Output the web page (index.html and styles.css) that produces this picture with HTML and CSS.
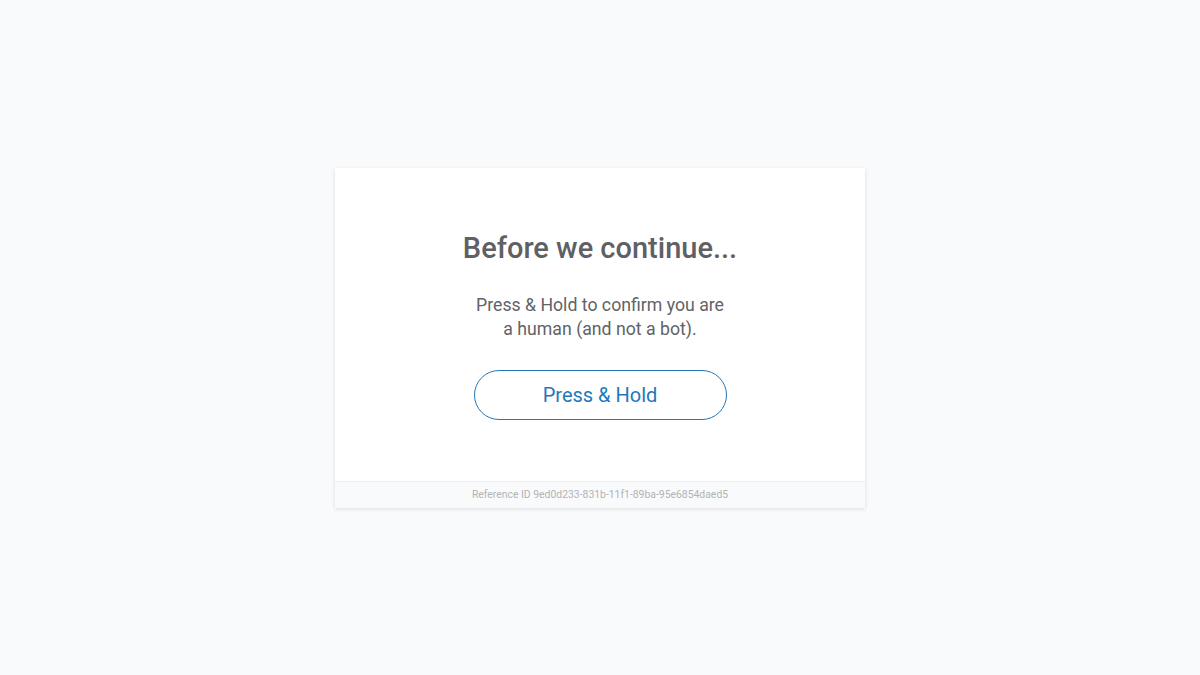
FILE: index.html
```html
<!DOCTYPE html>
<html>
  <head>
    <meta charset="utf-8" />
    <link rel="stylesheet" href="styles.css">
  </head>

  <body>
    <div class="page">
      <div class="card">
        <div class="card-body">
          <h1 class="title">Before we continue...</h1>
          <p class="text">Press &amp; Hold to confirm you are<br>a human (and not a bot).</p>
          <button class="hold">Press &amp; Hold</button>
        </div>
        <div class="card-footer">Reference ID 9ed0d233-831b-11f1-89ba-95e6854daed5</div>
      </div>
    </div>
  </body>
</html>
```

FILE: styles.css
```css
html,
body {
  margin: 0;
  padding: 0;
  height: 100%;
  background: #f9fafc;
  font-family: Roboto, "Liberation Sans", sans-serif;
}

.page {
  height: 100%;
  display: flex;
  align-items: center;
  justify-content: center;
}
.card {
  width: 530px;
  background: #fff;
  box-shadow: 0 1px 4px rgba(0, 0, 0, 0.12);
}
.card-body {
  padding: 63px 20px 61px;
  display: flex;
  flex-direction: column;
  align-items: center;
  text-align: center;
}
.title {
  margin: 0;
  font-size: 29px;
  line-height: 34px;
  font-weight: 500;
  color: #5f6064;
}
.text {
  margin: 28px 0 0;
  font-size: 17.7px;
  line-height: 24px;
  color: #626366;
}
.hold {
  margin-top: 29px;
  width: 253px;
  height: 50px;
  border: 1px solid #2376b7;
  border-radius: 25px;
  background: #fff;
  color: #1f78bd;
  font-family: inherit;
  font-size: 20px;
  cursor: pointer;
  outline: none;
}
.card-footer {
  height: 26px;
  line-height: 26px;
  border-top: 1px solid #eef0f2;
  background: #f9fafb;
  text-align: center;
  font-size: 10.4px;
  color: #b3b3b3;
}
```
